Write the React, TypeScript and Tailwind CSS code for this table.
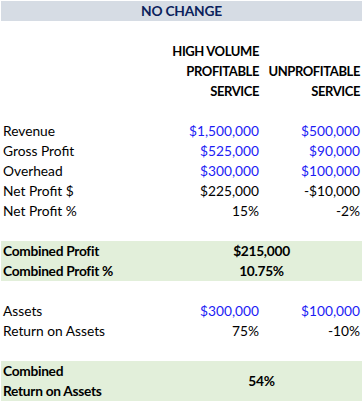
import React from 'react'

type Row = {
  label: string
  a: string
  b: string
  blue?: boolean
}

const topRows: Row[] = [
  { label: 'Revenue', a: '$1,500,000', b: '$500,000', blue: true },
  { label: 'Gross Profit', a: '$525,000', b: '$90,000', blue: true },
  { label: 'Overhead', a: '$300,000', b: '$100,000', blue: true },
  { label: 'Net Profit $', a: '$225,000', b: '-$10,000' },
  { label: 'Net Profit %', a: '15%', b: '-2%' },
]

const assetRows: Row[] = [
  { label: 'Assets', a: '$300,000', b: '$100,000', blue: true },
  { label: 'Return on Assets', a: '75%', b: '-10%' },
]

function DataRow({ row }: { row: Row }) {
  const valueColor = row.blue ? 'text-[#1c1cf5]' : 'text-black'
  return (
    <div className="grid h-5 grid-cols-[160px_100px_101px] items-center whitespace-nowrap">
      <div className="pl-[2px]">{row.label}</div>
      <div className={`pr-[2px] text-right ${valueColor}`}>{row.a}</div>
      <div className={`pr-[2px] text-right ${valueColor}`}>{row.b}</div>
    </div>
  )
}

function Blank() {
  return <div className="h-5" />
}

export default function App() {
  return (
    <div className="bg-white pl-[1px] pt-[1px] text-[13.75px] leading-5 text-black" style={{ fontFamily: 'Lato, "Liberation Sans", sans-serif' }}>
      <div className="w-[361px]">
        <div className="flex h-5 items-center justify-center bg-[#d6dce4] font-bold tracking-[-0.2px] text-[#0c1f5c]">NO CHANGE</div>
        <Blank />

        {/* column headers */}
        <div className="grid grid-cols-[160px_100px_101px] whitespace-nowrap text-[13px] font-bold tracking-[-0.4px]">
          <div />
          <div className="flex flex-col items-end pr-[2px]">
            <div className="h-5">HIGH VOLUME</div>
            <div className="h-5">PROFITABLE</div>
            <div className="h-5">SERVICE</div>
          </div>
          <div className="flex flex-col items-end pr-[2px]">
            <div className="h-5" />
            <div className="h-5">UNPROFITABLE</div>
            <div className="h-5">SERVICE</div>
          </div>
        </div>
        <Blank />

        {topRows.map((r) => (
          <DataRow key={r.label} row={r} />
        ))}
        <Blank />

        <div className="bg-[#e2efda] font-bold tracking-[-0.3px]">
          <div className="grid h-5 grid-cols-[160px_201px] items-center">
            <div className="pl-[2px]">Combined Profit</div>
            <div className="text-center">$215,000</div>
          </div>
          <div className="grid h-5 grid-cols-[160px_201px] items-center">
            <div className="pl-[2px]">Combined Profit %</div>
            <div className="text-center">10.75%</div>
          </div>
        </div>
        <Blank />

        {assetRows.map((r) => (
          <DataRow key={r.label} row={r} />
        ))}
        <Blank />

        <div className="grid h-10 grid-cols-[160px_201px] items-center bg-[#e2efda] font-bold tracking-[-0.3px]">
          <div className="pl-[2px]">
            <div className="h-5">Combined</div>
            <div className="h-5">Return on Assets</div>
          </div>
          <div className="text-center">54%</div>
        </div>
      </div>
    </div>
  )
}
